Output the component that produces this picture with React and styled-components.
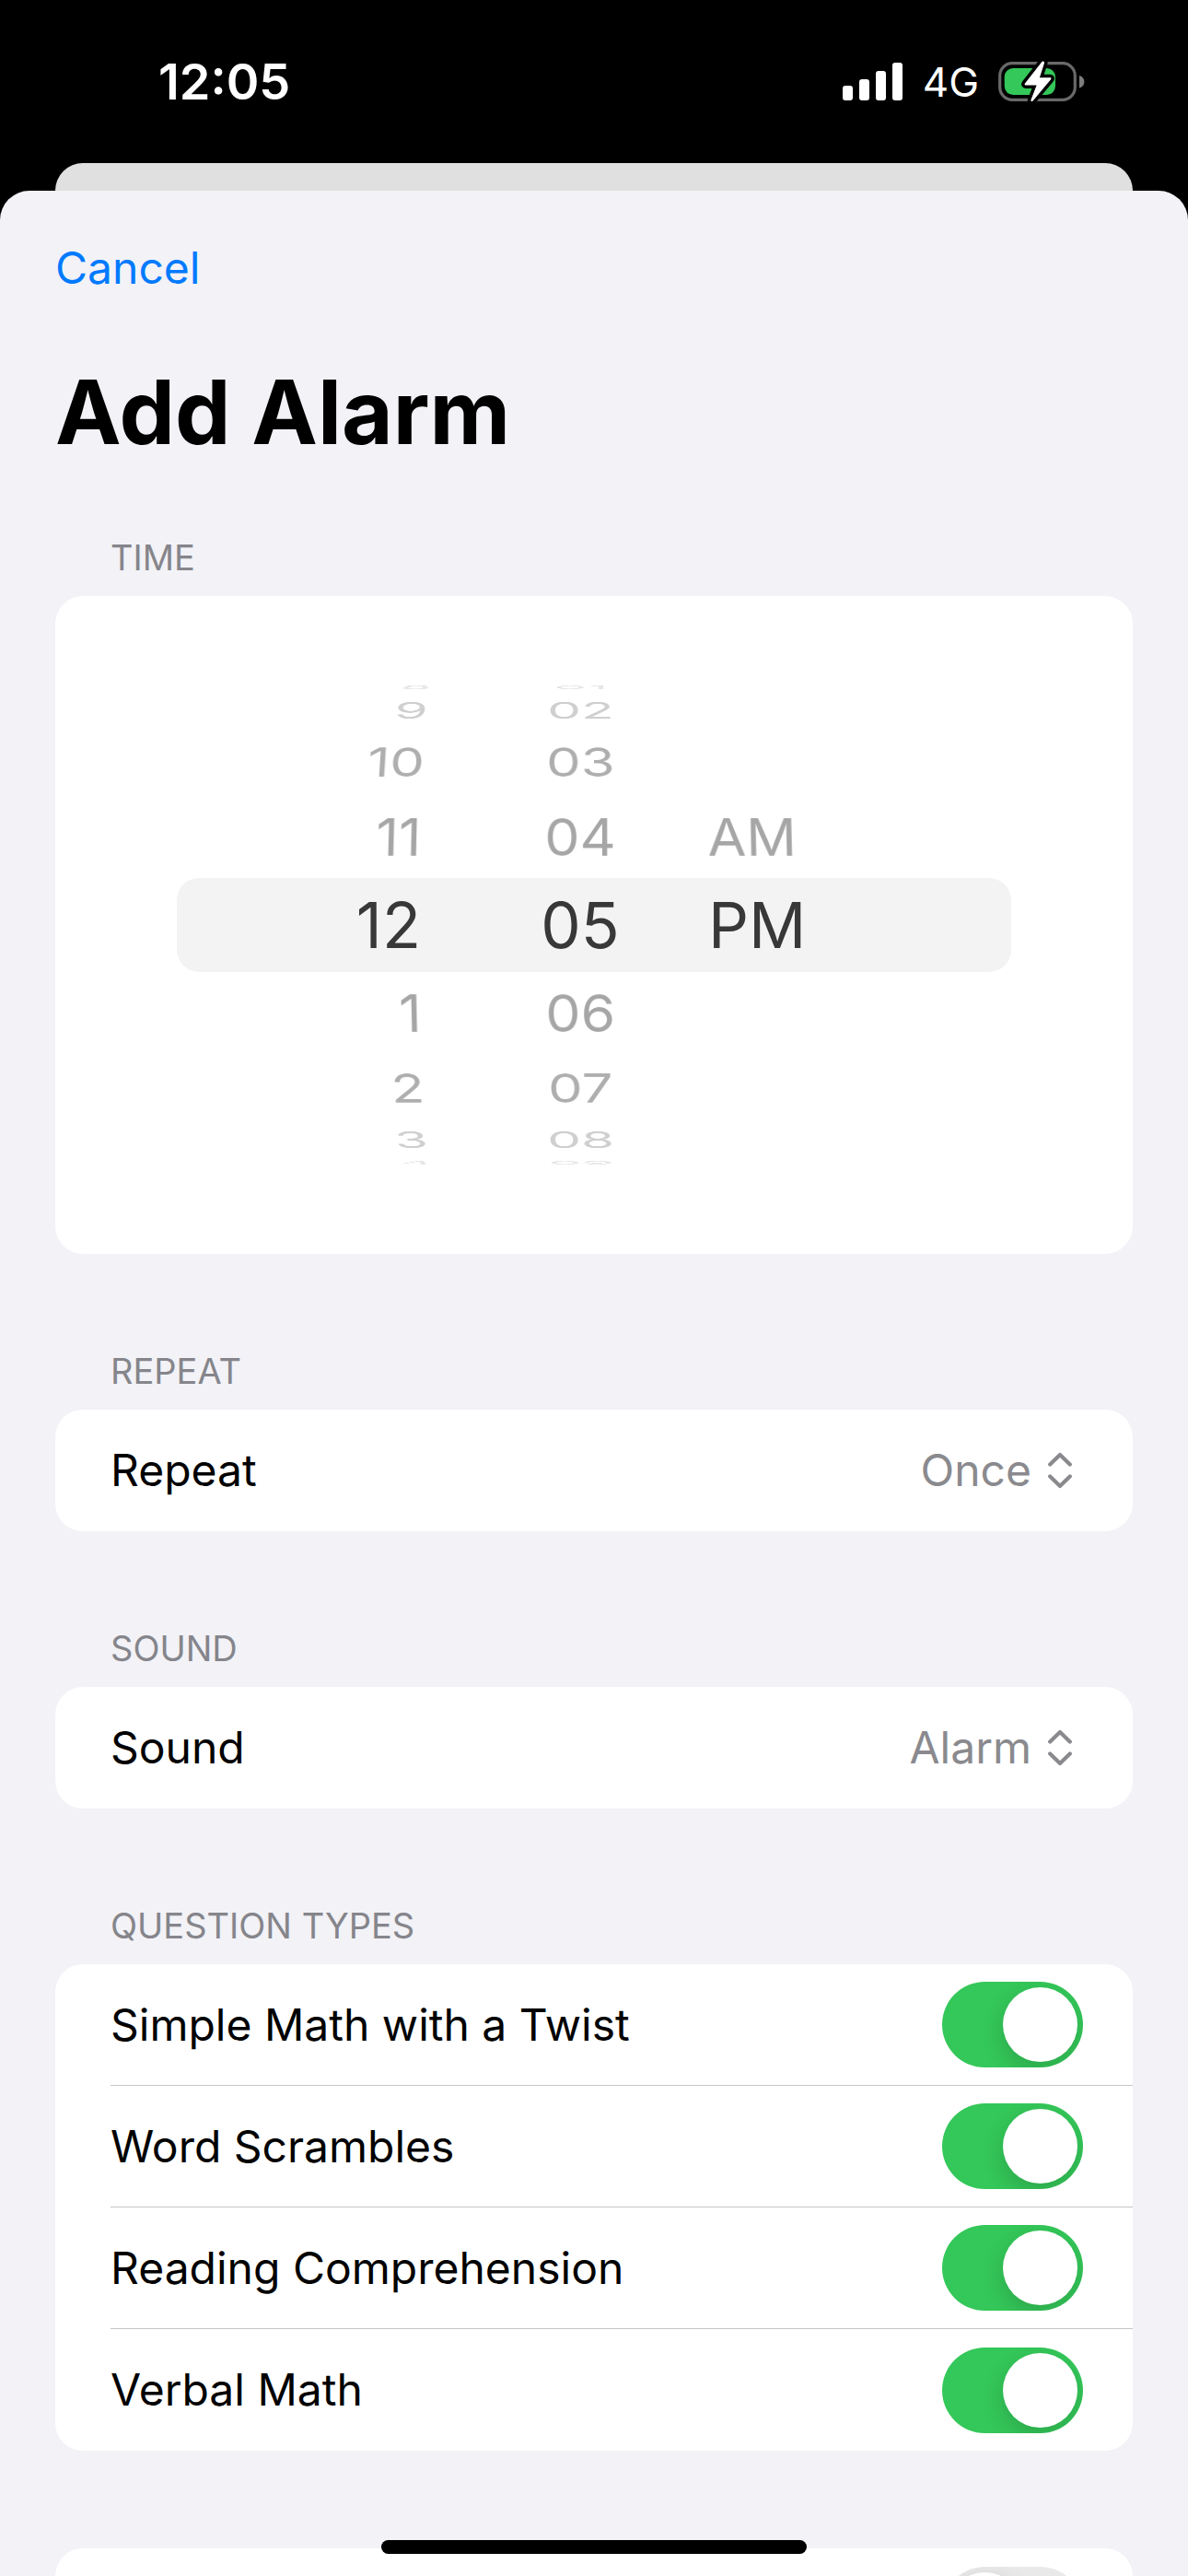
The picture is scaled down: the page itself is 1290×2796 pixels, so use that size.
import React, { useState } from "react";
import styled, { createGlobalStyle, css } from "styled-components";

const GlobalStyle = createGlobalStyle`
  *, *::before, *::after { box-sizing: border-box; }
  html { background: #000; }
  body {
    margin: 0;
    color: #000;
    font-family: Inter, "Liberation Sans", sans-serif;
    font-size: 48px;
    line-height: 60px;
  }
`;

const Screen = styled.div`
  display: flex;
  flex-direction: column;
  height: 100vh;
  overflow: hidden;
  background: #000;
`;

const StatusBar = styled.header`
  flex: none;
  display: flex;
  align-items: center;
  justify-content: space-between;
  height: 177px;
  padding: 0 112px 0 172px;
  color: #fff;
`;

const Clock = styled.time`
  font-size: 54px;
  font-weight: 600;
`;

const StatusIcons = styled.div`
  display: flex;
  align-items: center;
  gap: 21px;
`;

const Network = styled.span`
  font-size: 44px;
  font-weight: 400;
`;

const SheetBehind = styled.div`
  flex: none;
  height: 30px;
  margin: 0 60px;
  border-radius: 30px 30px 0 0;
  background: #e0e0e0;
`;

const Sheet = styled.main`
  flex: 1;
  display: flex;
  flex-direction: column;
  min-height: 0;
  overflow: hidden;
  border-radius: 32px 32px 0 0;
  background: #f2f2f7;
`;

const NavBar = styled.nav`
  flex: none;
  display: flex;
  align-items: center;
  height: 168px;
  padding: 0 60px;
`;

const Content = styled.div`
  flex: 1;
  min-height: 0;
  padding: 0 60px;
  overflow-y: auto;
  scrollbar-width: none;
`;

const CancelButton = styled.button`
  padding: 0;
  border: 0;
  background: none;
  color: #007aff;
  font: inherit;
  cursor: pointer;
`;

const Title = styled.h1`
  margin: 12px 0 77px;
  font-size: 96px;
  font-weight: 700;
  line-height: 120px;
`;

const Section = styled.section`
  margin-bottom: 106px;
`;

const SectionTitle = styled.h2`
  margin: 0;
  padding: 0 60px 21px;
  color: #85858b;
  font-size: 38px;
  font-weight: 400;
  line-height: 42px;
  text-transform: uppercase;
`;

const Card = styled.div`
  overflow: hidden;
  border-radius: 30px;
  background: #fff;
`;

const Row = styled.div`
  display: flex;
  align-items: center;
  justify-content: space-between;
  height: 132px;
  margin-left: 60px;
  padding-right: 54px;

  &:not(:last-child) {
    border-bottom: 1px solid #c6c6c8;
  }
`;

const Menu = styled.div`
  display: flex;
  align-items: center;
  gap: 18px;
  margin-right: 12px;
  color: #8a8a8e;
`;

const MenuSelect = styled.select`
  appearance: none;
  field-sizing: content;
  padding: 0;
  border: 0;
  background: none;
  color: inherit;
  font: inherit;
  text-align: right;
`;

const Switch = styled.input`
  appearance: none;
  flex: none;
  display: flex;
  width: 153px;
  height: 93px;
  margin: 0;
  padding: 6px;
  overflow: hidden;
  border-radius: 47px;
  background: #e9e9ea;
  cursor: pointer;

  &::before {
    content: "";
    width: 81px;
    height: 81px;
    border-radius: 50%;
    background: #fff;
    box-shadow: 0 9px 24px rgba(0, 0, 0, 0.16);
  }

  &:checked {
    justify-content: flex-end;
    background: #34c759;
  }
`;

const Picker = styled.div`
  padding: 84px 132px;
`;

const PickerWindow = styled.div`
  display: grid;
  grid-template-rows: 1fr 102px 1fr;
  height: 546px;
  overflow: hidden;
  perspective: 3200px;
`;

const PickerBand = styled.div`
  grid-area: 2 / 1;
  border-radius: 24px;
  background: #f3f3f4;
`;

const PickerColumns = styled.div`
  grid-area: 2 / 1;
  display: flex;
  align-items: center;
  justify-content: center;
  gap: 85px;
  padding-right: 64px;
  transform-style: preserve-3d;
`;

const Wheel = styled.ul`
  display: grid;
  align-items: center;
  justify-items: ${(p) => p.$align};
  width: ${(p) => p.$width}px;
  margin: 0;
  padding: 0 ${(p) => p.$inset}px 0 0;
  list-style: none;
  transform-style: preserve-3d;
`;

const WHEEL_RADIUS = 281;
const WHEEL_STEP = 20;
const FADE = [1, 0.35, 0.32, 0.19, 0.1];

const WheelItem = styled.li`
  grid-area: 1 / 1;
  color: #000;
  font-size: 61px;
  line-height: 84px;
  white-space: nowrap;
  opacity: ${(p) => FADE[Math.abs(p.$offset)]};
  transform: translateZ(-${WHEEL_RADIUS}px)
    rotateX(${(p) => -p.$offset * WHEEL_STEP}deg)
    translateZ(${WHEEL_RADIUS}px);

  ${(p) =>
    p.$offset === 0 &&
    css`
      color: #383838;
      font-size: 69px;
    `}
`;

const HomeIndicator = styled.div`
  position: fixed;
  bottom: 24px;
  left: 50%;
  width: 462px;
  height: 15px;
  border-radius: 8px;
  background: #000;
  transform: translateX(-50%);
`;

function SignalIcon() {
  return (
    <svg width="66" height="42" viewBox="0 0 66 42" fill="#fff" aria-hidden="true">
      <rect x="0" y="25" width="11" height="16" rx="3" />
      <rect x="18" y="18" width="11" height="23" rx="3" />
      <rect x="36" y="9" width="11" height="32" rx="3" />
      <rect x="54" y="0" width="11" height="41" rx="3" />
    </svg>
  );
}

function BatteryIcon() {
  return (
    <svg width="94" height="46" viewBox="0 0 94 46" aria-hidden="true">
      <rect x="1.7" y="2.7" width="81.6" height="39.6" rx="13.5" fill="none" stroke="#69696a" strokeWidth="3.2" />
      <path d="M88 16c3.400 1 5.400 3.600 5.400 6.800s-2 5.800-5.400 6.800z" fill="#7d7d7e" />
      <rect x="6.700" y="8" width="55.300" height="29" rx="9.500" fill="#34c759" />
      <path
        d="M47.200 1.200 29 24.500c-.8 1.200-.2 2 .9 2h11.700l-6 15.500c-.8 2 .9 2.800 2.200 1.300L57 20.200c.9-1.200.2-2-.9-2H44.900l5-15.400c.6-2-1.400-3.100-2.700-1.600z"
        fill="#fff"
        stroke="#000"
        strokeWidth="7"
        strokeLinejoin="round"
        paintOrder="stroke"
      />
    </svg>
  );
}

function UpDownIcon() {
  return (
    <svg
      width="26"
      height="40"
      viewBox="0 0 26 40"
      fill="none"
      stroke="currentColor"
      strokeWidth="4.2"
      strokeLinecap="round"
      strokeLinejoin="round"
      aria-hidden="true"
    >
      <path d="M2.200 13.500 13 3l10.800 10.500M2.200 26.500 13 37l10.800-10.500" />
    </svg>
  );
}

function WheelColumn({ label, items, selected, align, width, inset = 0 }) {
  return (
    <Wheel role="listbox" aria-label={label} $align={align} $width={width} $inset={inset}>
      {items.map((item, index) => (
        <WheelItem
          key={item}
          role="option"
          aria-selected={index === selected}
          $offset={index - selected}
        >
          {item}
        </WheelItem>
      ))}
    </Wheel>
  );
}

function MenuRow({ id, label, options }) {
  return (
    <Row>
      <label htmlFor={id}>{label}</label>
      <Menu>
        <MenuSelect id={id} defaultValue={options[0]}>
          {options.map((option) => (
            <option key={option}>{option}</option>
          ))}
        </MenuSelect>
        <UpDownIcon />
      </Menu>
    </Row>
  );
}

function SwitchRow({ id, label, initial = true }) {
  const [on, setOn] = useState(initial);
  return (
    <Row>
      <label htmlFor={id}>{label}</label>
      <Switch
        id={id}
        type="checkbox"
        role="switch"
        checked={on}
        onChange={(event) => setOn(event.target.checked)}
      />
    </Row>
  );
}

const HOURS = ["8", "9", "10", "11", "12", "1", "2", "3", "4"];
const MINUTES = ["01", "02", "03", "04", "05", "06", "07", "08", "09"];
const PERIODS = ["AM", "PM"];
const QUESTION_TYPES = [
  "Simple Math with a Twist",
  "Word Scrambles",
  "Reading Comprehension",
  "Verbal Math",
];

export default function App() {
  return (
    <>
      <GlobalStyle />
      <Screen>
        <StatusBar>
          <Clock>12:05</Clock>
          <StatusIcons>
            <SignalIcon />
            <Network>4G</Network>
            <BatteryIcon />
          </StatusIcons>
        </StatusBar>
        <SheetBehind />
        <Sheet>
          <NavBar>
            <CancelButton type="button">Cancel</CancelButton>
          </NavBar>
          <Content>
            <Title>Add Alarm</Title>

            <Section>
              <SectionTitle>Time</SectionTitle>
              <Card>
                <Picker>
                  <PickerWindow>
                    <PickerBand />
                    <PickerColumns>
                      <WheelColumn label="Hour" items={HOURS} selected={4} align="end" width={134} inset={34} />
                      <WheelColumn label="Minute" items={MINUTES} selected={4} align="center" width={108} />
                      <WheelColumn label="AM or PM" items={PERIODS} selected={1} align="start" width={100} />
                    </PickerColumns>
                  </PickerWindow>
                </Picker>
              </Card>
            </Section>

            <Section>
              <SectionTitle>Repeat</SectionTitle>
              <Card>
                <MenuRow id="repeat" label="Repeat" options={["Once"]} />
              </Card>
            </Section>

            <Section>
              <SectionTitle>Sound</SectionTitle>
              <Card>
                <MenuRow id="sound" label="Sound" options={["Alarm"]} />
              </Card>
            </Section>

            <Section>
              <SectionTitle>Question Types</SectionTitle>
              <Card>
                {QUESTION_TYPES.map((type, index) => (
                  <SwitchRow key={type} id={`question-${index}`} label={type} />
                ))}
              </Card>
            </Section>

            <Card>
              <SwitchRow id="snooze" label="" initial={false} />
            </Card>
          </Content>
        </Sheet>
        <HomeIndicator />
      </Screen>
    </>
  );
}
